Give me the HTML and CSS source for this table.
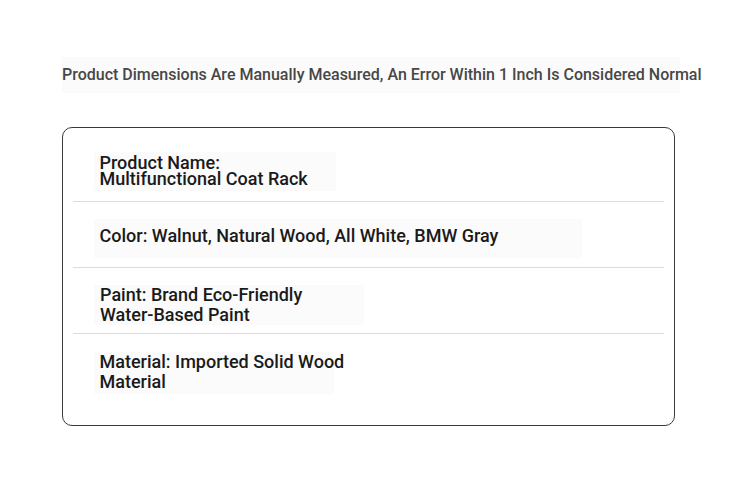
FILE: index.html
```html
<!DOCTYPE html>
<html lang="en">
<head>
<meta charset="utf-8">
<title>Product Specs</title>
<link rel="stylesheet" href="styles.css">
</head>
<body>
<div class="page">
  <p class="notice"><span class="notice-text">Product Dimensions Are Manually Measured, An Error Within 1 Inch Is Considered Normal</span></p>
  <div class="card">
    <div class="row row-name"><p class="spec spec-name">Product Name:<br>Multifunctional Coat Rack</p></div>
    <div class="row row-color"><p class="spec spec-color">Color: Walnut, Natural Wood, All White, BMW Gray</p></div>
    <div class="row row-paint"><p class="spec spec-paint">Paint: Brand Eco-Friendly<br>Water-Based Paint</p></div>
    <div class="row row-material"><p class="spec spec-material">Material: Imported Solid Wood<br>Material</p></div>
  </div>
</div>
</body>
</html>
```
FILE: styles.css
```css
html, body {
  margin: 0;
  padding: 0;
  background: #ffffff;
}
body {
  font-family: Roboto, "Liberation Sans", Arial, sans-serif;
}
.page {
  padding: 57px 75px 0 62px;
}
.notice {
  margin: 0;
  height: 36px;
  font-size: 16px;
  font-weight: 500;
  line-height: 36px;
  color: #474747;
  white-space: nowrap;
}
.notice-text {
  display: inline-block;
  width: 618px;
  background: #fbfbfb;
}
.card {
  box-sizing: border-box;
  height: 299px;
  margin-top: 34px;
  border: 1.5px solid #3a3a3a;
  border-radius: 10px;
  padding: 0 10px;
  display: flex;
  flex-direction: column;
}
.row {
  border-bottom: 1.5px solid #dcdcdc;
  padding-left: 20.5px;
}
.row:last-child {
  border-bottom: none;
}
.spec {
  display: block;
  box-sizing: border-box;
  margin: 0;
  font-size: 18px;
  font-weight: 500;
  line-height: 20px;
  color: #1a1a1a;
  background: #fbfbfb;
  padding: 0 6px;
  white-space: nowrap;
}
.spec-name {
  width: 242px;
  line-height: 16px;
  padding: 3px 6px 4px;
}
.spec-color {
  width: 488px;
  padding: 7px 6px 12px;
}
.spec-paint {
  width: 270px;
  padding: 0 6px 0 6.5px;
}
.spec-material {
  width: 240px;
  padding: 0 6px 2px;
}
.row-name {
  padding-top: 23.5px;
  padding-bottom: 10px;
}
.row-color {
  padding-top: 17.5px;
  padding-bottom: 9px;
}
.row-paint {
  padding-top: 16.5px;
  padding-bottom: 8.5px;
}
.row-material {
  padding-top: 17.5px;
}
```
